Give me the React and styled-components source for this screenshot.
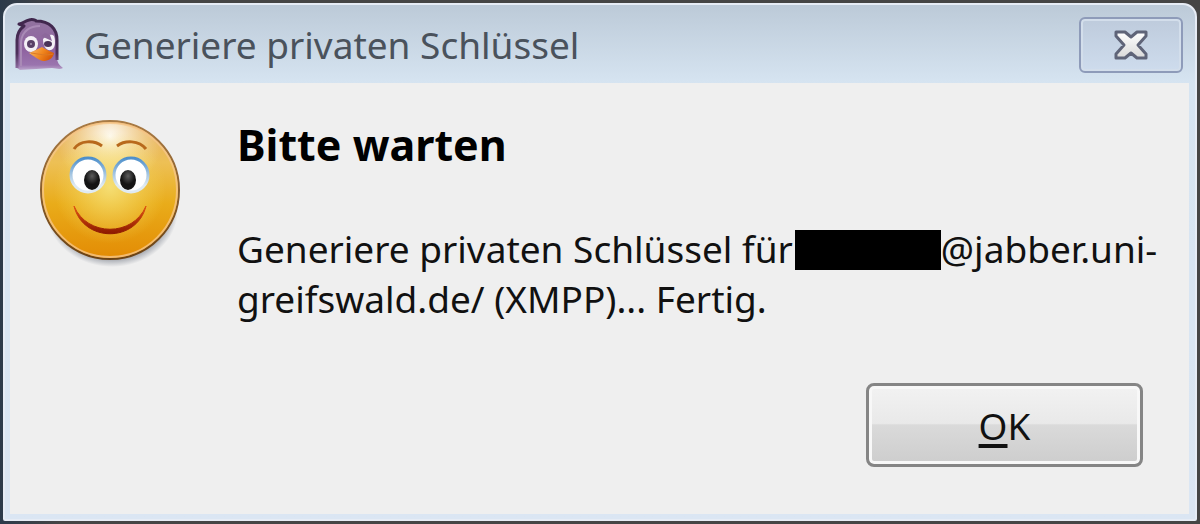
import styled, { createGlobalStyle } from "styled-components";

const App = () => {
  return (
    <Desktop>
      <GlobalStyle />
      <Dialog role="dialog" aria-labelledby="dialog-title">
        <TitleBar>
          <PidginIcon />
          <Title id="dialog-title">Generiere privaten Schlüssel</Title>
          <CloseButton type="button" aria-label="Schließen">
            <CloseIcon />
          </CloseButton>
        </TitleBar>
        <Content>
          <Message>
            <SmileyIcon />
            <MessageText>
              <Heading>Bitte warten</Heading>
              <Status>
                Generiere privaten Schlüssel für
                <Redacted />
                @jabber.uni-
                <br />
                greifswald.de/ (XMPP)... Fertig.
              </Status>
            </MessageText>
          </Message>
          <Actions>
            <OkButton type="button" accessKey="o">
              <Mnemonic>O</Mnemonic>K
            </OkButton>
          </Actions>
        </Content>
      </Dialog>
    </Desktop>
  );
};

export default App;

const PidginIcon = () => (
  <PidginSvg viewBox="0 0 50 54" aria-hidden="true">
    <defs>
      <linearGradient id="pidginBody" x1="0" y1="0" x2="0" y2="1">
        <stop offset="0" stopColor="#9273a0" />
        <stop offset="0.6" stopColor="#8f63a0" />
        <stop offset="0.9" stopColor="#9a74ae" />
        <stop offset="1" stopColor="#bba6cc" />
      </linearGradient>
      <linearGradient id="pidginOutline" x1="0" y1="0" x2="0" y2="1">
        <stop offset="0" stopColor="#3f264c" />
        <stop offset="0.7" stopColor="#4e315c" />
        <stop offset="1" stopColor="#8d6b9e" />
      </linearGradient>
      <linearGradient id="pidginBeak" x1="0" y1="0" x2="1" y2="0.4">
        <stop offset="0" stopColor="#f9c070" />
        <stop offset="0.6" stopColor="#f0861e" />
        <stop offset="1" stopColor="#d85c08" />
      </linearGradient>
    </defs>
    <path
      d="M3 50 L3 22 C3 15 6 11 10 8 L5 6 C9 6 10 3 15 2 C18 1 22 2 22 3 C36 3 43 11 43 22 L43 40 C43 44 45 47 49 50 C45 52 42 50 38 50 L6 52 Z"
      fill="url(#pidginBody)"
    />
    <path
      d="M3 50 L3 22 C3 15 6 11 10 8 L5 6 C9 6 10 3 15 2 C18 1 22 2 22 3 C36 3 43 11 43 22 L43 42"
      fill="none"
      stroke="url(#pidginOutline)"
      strokeWidth="3"
      strokeLinejoin="round"
    />
    <path d="M7 48 L7 24 C8 13 16 8 26 8" fill="none" stroke="#a98ab6" strokeWidth="2" />
    <ellipse cx="17" cy="26" rx="7" ry="8" fill="#f4f0f6" />
    <path d="M29 21 C32 18 37 15 40 18 C42 24 41 31 37 32 C32 33 29 28 29 21 Z" fill="#f4f0f6" />
    <path d="M27 18 L38 23 L36 17 L31 15 Z" fill="#8c689b" />
    <circle cx="17" cy="26" r="4" fill="#5a4168" />
    <circle cx="17" cy="26" r="1" fill="#a997b4" />
    <ellipse cx="34" cy="26" rx="4" ry="3" fill="#4a3358" />
    <path
      d="M15 35 C20 33 24 31 28 29 C31 31 35 33 40 35 C39 41 34 43 29 43 C24 42 20 38 15 35 Z"
      fill="url(#pidginBeak)"
    />
    <path d="M17 35 C25 36 32 38 39 36" fill="none" stroke="#dd7a24" strokeWidth="1" />
  </PidginSvg>
);

const CloseIcon = () => (
  <CloseSvg viewBox="0 0 38 32" aria-hidden="true">
    <defs>
      <linearGradient id="closeFill" x1="0" y1="0" x2="0" y2="1">
        <stop offset="0" stopColor="#ffffff" />
        <stop offset="1" stopColor="#d9d9d9" />
      </linearGradient>
    </defs>
    <path
      d="M4 3 H13 L19 8 L25 3 H34 V7 L26 16 L34 25 V29 H25 L19 24 L13 29 H4 V25 L12 16 L4 7 Z"
      fill="url(#closeFill)"
      stroke="#5f6478"
      strokeWidth="3"
      strokeLinejoin="round"
    />
  </CloseSvg>
);

const SmileyIcon = () => (
  <SmileySvg viewBox="0 0 160 160" aria-hidden="true">
    <defs>
      <linearGradient id="faceFill" x1="0" y1="0" x2="0" y2="1">
        <stop offset="0" stopColor="#e4ac68" />
        <stop offset="0.3" stopColor="#edc055" />
        <stop offset="0.6" stopColor="#e9ac1a" />
        <stop offset="1" stopColor="#e38b04" />
      </linearGradient>
      <radialGradient id="faceShine" cx="0.5" cy="0.1" r="0.4">
        <stop offset="0" stopColor="#fff" stopOpacity="0.95" />
        <stop offset="1" stopColor="#fff4c0" stopOpacity="0" />
      </radialGradient>
      <radialGradient id="faceGlow" cx="0.5" cy="0.48" r="0.42">
        <stop offset="0" stopColor="#f6e27a" stopOpacity="0.9" />
        <stop offset="1" stopColor="#f6dc60" stopOpacity="0" />
      </radialGradient>
      <linearGradient id="faceRim" x1="0" y1="0" x2="0" y2="1">
        <stop offset="0" stopColor="#a97b45" />
        <stop offset="1" stopColor="#6b4214" />
      </linearGradient>
      <linearGradient id="mouthFill" x1="0" y1="0" x2="0" y2="1">
        <stop offset="0" stopColor="#e05212" />
        <stop offset="1" stopColor="#8c1800" />
      </linearGradient>
      <linearGradient id="eyeRim" x1="0" y1="0" x2="0" y2="1">
        <stop offset="0" stopColor="#4d8fcb" />
        <stop offset="0.8" stopColor="#dfeaf2" />
      </linearGradient>
      <radialGradient id="pupilFill" cx="0.5" cy="0.3" r="0.7">
        <stop offset="0" stopColor="#5c5c5c" />
        <stop offset="0.6" stopColor="#141414" />
      </radialGradient>
      <radialGradient id="smileyShadow">
        <stop offset="0.7" stopColor="#2c3444" stopOpacity="0.85" />
        <stop offset="1" stopColor="#3a4458" stopOpacity="0" />
      </radialGradient>
    </defs>
    <ellipse cx="82" cy="100" rx="66" ry="57" fill="url(#smileyShadow)" />
    <circle cx="80" cy="80" r="69" fill="url(#faceFill)" stroke="url(#faceRim)" strokeWidth="2" />
    <circle cx="80" cy="80" r="67" fill="url(#faceShine)" />
    <circle cx="80" cy="80" r="67" fill="url(#faceGlow)" />
    <circle cx="80" cy="80" r="67" fill="none" stroke="#f6c68a" strokeWidth="2" opacity="0.8" />
    <path d="M44 39 C50 30 64 30 72 36" fill="none" stroke="#b8691c" strokeWidth="3" />
    <path d="M87 36 C95 30 109 30 116 39" fill="none" stroke="#b8691c" strokeWidth="3" />
    <ellipse cx="58" cy="65" rx="17" ry="17" fill="#fff" stroke="url(#eyeRim)" strokeWidth="3" />
    <ellipse cx="101" cy="65" rx="17" ry="17" fill="#fff" stroke="url(#eyeRim)" strokeWidth="3" />
    <ellipse cx="62" cy="70" rx="8" ry="10" fill="url(#pupilFill)" />
    <ellipse cx="98" cy="70" rx="8" ry="10" fill="url(#pupilFill)" />
    <path d="M44 96 C57 127 103 127 116 96 C107 133 53 133 44 96 Z" fill="url(#mouthFill)" stroke="url(#mouthFill)" strokeWidth="1" />
  </SmileySvg>
);

const GlobalStyle = createGlobalStyle`
  * {
    box-sizing: border-box;
  }

  body {
    margin: 0;
    font-family: "Noto Sans", "Open Sans", sans-serif;
    font-size: 37px;
    color: #111;
  }
`;

const Desktop = styled.main`
  display: flex;
  min-height: 100vh;
  padding: 3px;
  background: linear-gradient(90deg, #2c3a4a 0, #454545 60px);
`;

const Dialog = styled.section`
  display: flex;
  flex: 1;
  flex-direction: column;
  padding: 0 6px 5px 5px;
  border: 2px solid #e6ecf5;
  border-radius: 14px 14px 2px 2px;
  background: linear-gradient(#bccad8 0, #d6e4f1 78px, #dbe6f3);
`;

const TitleBar = styled.header`
  display: flex;
  align-items: center;
  height: 78px;
  padding: 2px 6px 0 4px;
`;

const PidginSvg = styled.svg`
  width: 50px;
  height: 54px;
`;

const Title = styled.h1`
  flex: 1;
  margin: 0 0 0 20px;
  font-size: 37px;
  font-weight: 400;
  line-height: 50px;
  color: #4a525c;
`;

const CloseButton = styled.button`
  display: flex;
  align-items: center;
  justify-content: center;
  width: 104px;
  height: 56px;
  padding: 0;
  border: 2px solid #8e9bb9;
  border-radius: 6px;
  background: linear-gradient(#becbdc, #cedced);
  box-shadow: inset 0 0 0 2px #d3deeb;
`;

const CloseSvg = styled.svg`
  width: 38px;
  height: 32px;
`;

const Content = styled.div`
  display: flex;
  flex: 1;
  flex-direction: column;
  justify-content: space-between;
  padding: 27px 46px 47px 20px;
  background: #efefef;
`;

const Message = styled.div`
  display: flex;
  align-items: flex-start;
  gap: 47px;
  margin-right: -46px;
`;

const SmileySvg = styled.svg`
  flex: none;
  width: 160px;
  height: 160px;
`;

const MessageText = styled.div`
  flex: 1;
  padding-top: 10px;
`;

const Heading = styled.h2`
  margin: 0 0 54px;
  font-size: 43px;
  font-weight: 700;
  line-height: 50px;
  color: #000;
`;

const Status = styled.p`
  margin: 0;
  line-height: 50px;
  white-space: nowrap;
`;

const Redacted = styled.span`
  display: inline-block;
  width: 146px;
  height: 40px;
  margin-left: 2px;
  vertical-align: -7px;
  background: #000;
`;

const Actions = styled.div`
  display: flex;
  justify-content: flex-end;
`;

const OkButton = styled.button`
  width: 277px;
  height: 84px;
  padding: 0;
  border: 3px solid #858585;
  border-radius: 8px;
  background: linear-gradient(#f2f2f2, #e9e9e9 48%, #dadada 50%, #cdcdcd);
  box-shadow: inset 0 0 0 3px #f8f8f8;
  font: inherit;
  color: #111;
`;

const Mnemonic = styled.span`
  text-decoration: underline;
  text-decoration-thickness: 4px;
  text-underline-offset: 4px;
`;
